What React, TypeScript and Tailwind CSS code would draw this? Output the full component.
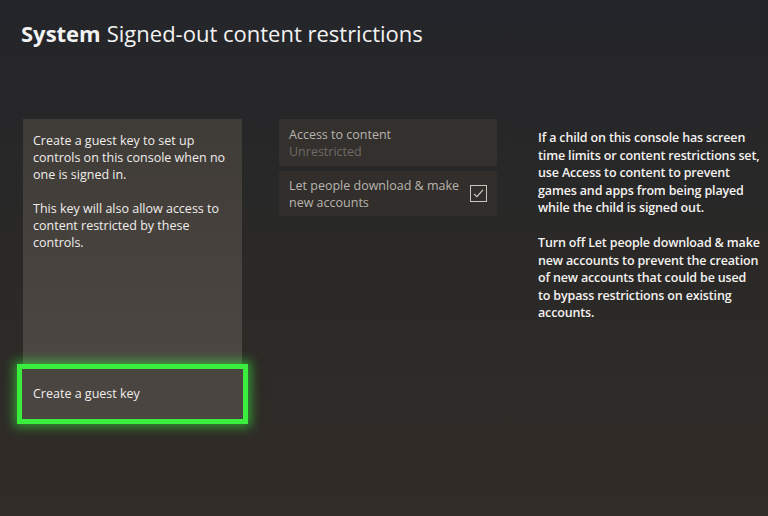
export default function App() {
  return (
    <div
      className="relative h-[516px] w-[768px] overflow-hidden bg-gradient-to-b from-[#24252a] via-[#2a2927] to-[#322c28] text-white"
      style={{ fontFamily: '"Open Sans", "Noto Sans", sans-serif' }}
    >
      {/* Header */}
      <h1 className="pl-[21px] pt-[18px] text-[22px] leading-[30px] text-[#f2f2f2]">
        <span className="font-bold">System</span>
        <span className="ml-[6px]">Signed-out content restrictions</span>
      </h1>

      <div className="mt-[71px] flex">
        {/* Left column */}
        <div className="ml-[17px] flex w-[231px] flex-col">
          <div className="mx-[6px] h-[245px] bg-gradient-to-b from-[#3f3b37] to-[#4c4742] px-[10px] pt-[13px] text-[12.5px] leading-[17px] text-[#f0eeec]">
            <p>Create a guest key to set up controls on this console when no one is signed in.</p>
            <p className="mt-[17px]">This key will also allow access to content restricted by these controls.</p>
          </div>
          <button className="flex h-[60px] items-center border-[5px] border-[#39ee3c] bg-[#4a4541] pl-[11px] text-left text-[12.5px] text-[#f0eeec] shadow-[0_0_10px_3px_rgba(57,238,60,0.55)]">
            Create a guest key
          </button>
        </div>

        {/* Middle column */}
        <div className="ml-[31px] flex w-[218px] flex-col gap-[5px]">
          <div className="flex h-[47px] flex-col justify-center bg-[#33302d] px-[10px] text-[12.5px] leading-[17px]">
            <span className="text-[#b9b4ae]">Access to content</span>
            <span className="text-[#6f6a66]">Unrestricted</span>
          </div>
          <div className="flex h-[45px] items-center justify-between bg-[#312e2b] pl-[10px] pr-[10px] text-[12.5px] leading-[17px]">
            <span className="w-[175px] text-[#b9b4ae]">Let people download &amp; make new accounts</span>
            <span className="flex h-[17px] w-[17px] items-center justify-center border-[1.5px] border-[#c9c5c0]">
              <svg viewBox="0 0 16 16" className="h-[13px] w-[13px]" fill="none" stroke="#d6d2cd" strokeWidth="1.4">
                <path d="M2.5 8.5 L6 12 L13.5 3.5" />
              </svg>
            </span>
          </div>
        </div>

        {/* Right column */}
        <div className="ml-[41px] mt-[10px] w-[223px] text-[12.5px] font-semibold leading-[17.6px] tracking-[-0.15px] text-[#f4f2f0]">
          <p>If a child on this console has screen time limits or content restrictions set, use Access to content to prevent games and apps from being played while the child is signed out.</p>
          <p className="mt-[17px]">Turn off Let people download &amp; make new accounts to prevent the creation of new accounts that could be used to bypass restrictions on existing accounts.</p>
        </div>
      </div>
    </div>
  );
}
